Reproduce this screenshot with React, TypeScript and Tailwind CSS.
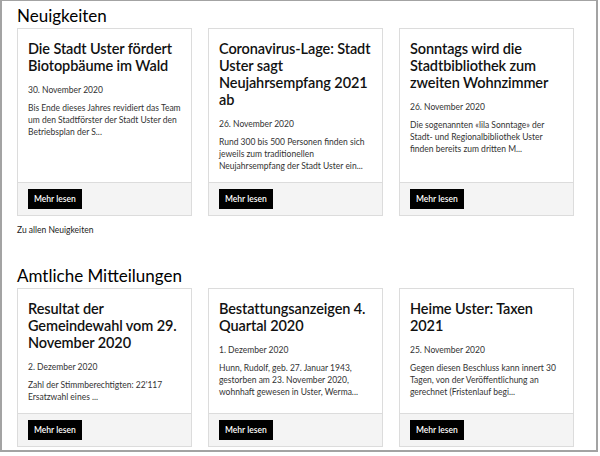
type Item = { title: string; date: string; text: string };

const news: Item[] = [
  {
    title: "Die Stadt Uster fördert Biotopbäume im Wald",
    date: "30. November 2020",
    text: "Bis Ende dieses Jahres revidiert das Team um den Stadtförster der Stadt Uster den Betriebsplan der S...",
  },
  {
    title: "Coronavirus-Lage: Stadt Uster sagt Neujahrsempfang 2021 ab",
    date: "26. November 2020",
    text: "Rund 300 bis 500 Personen finden sich jeweils zum traditionellen Neujahrsempfang der Stadt Uster ein...",
  },
  {
    title: "Sonntags wird die Stadtbibliothek zum zweiten Wohnzimmer",
    date: "26. November 2020",
    text: "Die sogenannten «lila Sonntage» der Stadt- und Regionalbibliothek Uster finden bereits zum dritten M...",
  },
];

const notices: Item[] = [
  {
    title: "Resultat der Gemeindewahl vom 29. November 2020",
    date: "2. Dezember 2020",
    text: "Zahl der Stimmberechtigten: 22'117 Ersatzwahl eines ...",
  },
  {
    title: "Bestattungsanzeigen 4. Quartal 2020",
    date: "1. Dezember 2020",
    text: "Hunn, Rudolf, geb. 27. Januar 1943, gestorben am 23. November 2020, wohnhaft gewesen in Uster, Werma...",
  },
  {
    title: "Heime Uster: Taxen 2021",
    date: "25. November 2020",
    text: "Gegen diesen Beschluss kann innert 30 Tagen, von der Veröffentlichung an gerechnet (Fristenlauf begi...",
  },
];

function Card({ item }: { item: Item }) {
  return (
    <article className="flex flex-col border border-[#dcdcdc] bg-white">
      <div className="flex-1 px-[10px] pt-[11px] pb-[10px]">
        <h3 className="text-[14.5px] leading-[17px] font-semibold tracking-[-0.1px] text-[#111]">{item.title}</h3>
        <p className="mt-[10px] text-[8.5px] leading-[12px] text-[#333]">{item.date}</p>
        <p className="mt-[6px] text-[8.5px] leading-[12px] text-[#333]">{item.text}</p>
      </div>
      <div className="flex border-t border-[#dcdcdc] bg-[#f4f4f4] px-[10px] py-[6px]">
        <button className="h-[20px] bg-black px-[6px] text-[8.5px] leading-[20px] font-semibold text-white">
          Mehr lesen
        </button>
      </div>
    </article>
  );
}

function Section({ title, items }: { title: string; items: Item[] }) {
  return (
    <section>
      <h2 className="text-[17px] leading-[22px] text-black">{title}</h2>
      <div className="mt-px grid w-[557px] grid-cols-3 gap-4">
        {items.map((item) => (
          <Card key={item.title} item={item} />
        ))}
      </div>
    </section>
  );
}

export default function App() {
  return (
    <div className="h-[452px] w-[598px] overflow-hidden border-t border-r-2 border-b-2 border-l-2 border-[#a3a3a3] bg-white pl-[15px] pt-[4px] font-['Lato',sans-serif]">
      <Section title="Neuigkeiten" items={news} />
      <a className="mt-[8px] block text-[8.5px] leading-[12px] text-[#222]">Zu allen Neuigkeiten</a>
      <div className="mt-[29px]">
        <Section title="Amtliche Mitteilungen" items={notices} />
      </div>
    </div>
  );
}
